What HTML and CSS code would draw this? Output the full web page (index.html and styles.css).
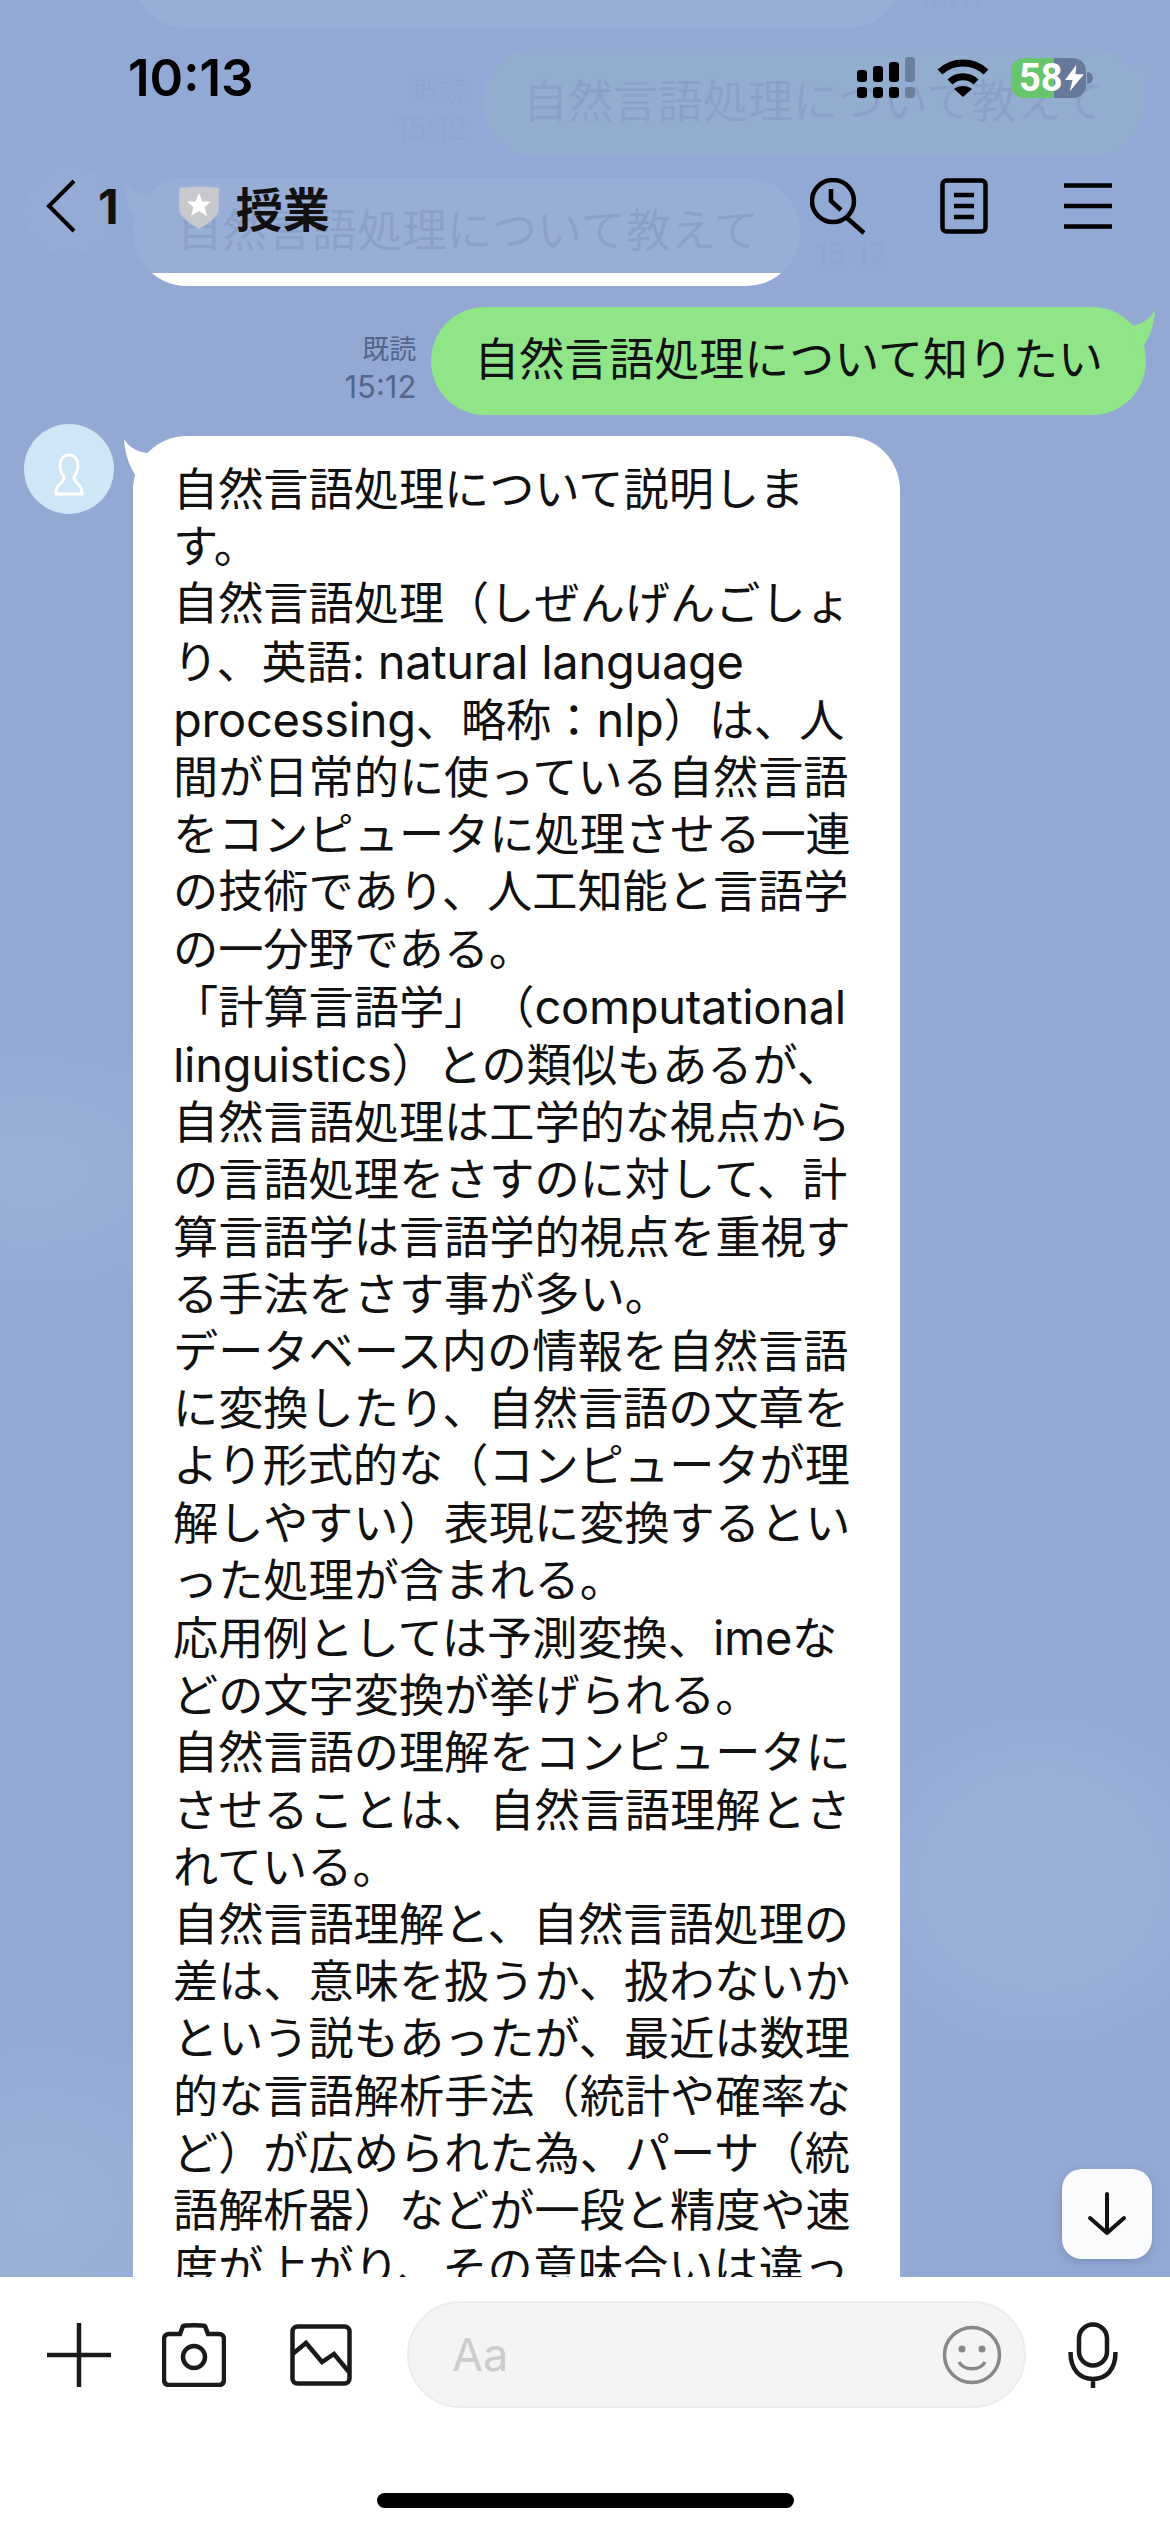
FILE: index.html
```html
<!DOCTYPE html>
<html lang="ja">
<head>
    <meta charset="UTF-8">
    <meta name="viewport" content="width=device-width, initial-scale=1.0">
    <title>授業</title>
    <link rel="stylesheet" href="styles.css">
</head>
<body>
    <div class="phone">
        <div class="chat">
            <div class="row row-left row-first">
                <div class="spacer"></div>
                <div class="bubble bubble-white bubble-first"></div>
                <div class="meta meta-left"><span class="time">15:11</span></div>
            </div>
            <div class="row row-right">
                <div class="meta"><span>既読</span><span class="time">15:12</span></div>
                <div class="bubble bubble-green bubble-ghost-green">自然言語処理について教えて
                    <svg class="tail tail-right" viewBox="0 0 26 44"><path d="M0 16C10 16 20 10 26 0C25 16 20 32 8 44Z"/></svg>
                </div>
            </div>
            <div class="row row-left">
                <div class="avatar avatar-ghost"></div>
                <div class="bubble bubble-white bubble-ghost-white">自然言語処理について教えて
                    <svg class="tail tail-left" viewBox="0 0 26 44"><path d="M26 14C16 14 6 10 0 0C1 16 6 32 18 44Z"/></svg>
                </div>
                <div class="meta meta-left"><span class="time">15:12</span></div>
            </div>
            <div class="row row-right">
                <div class="meta"><span>既読</span><span class="time">15:12</span></div>
                <div class="bubble bubble-green">自然言語処理について知りたい
                    <svg class="tail tail-right" viewBox="0 0 26 44"><path d="M0 16C10 16 20 10 26 0C25 16 20 32 8 44Z"/></svg>
                </div>
            </div>
            <div class="row row-left">
                <div class="avatar">
                    <svg viewBox="0 0 90 90" class="avatar-icon"><path d="M45 31c-6 0-9 5-9 11 0 5 2 8 4 11 0 4-2 5-5 8-2 2-3 5-3 9h26c0-4-1-7-3-9-3-3-5-4-5-8 2-3 4-6 4-11 0-6-3-11-9-11Z"/></svg>
                </div>
                <div class="bubble bubble-white bubble-long">自然言語処理について説明しま<br>す。<br>自然言語処理（しぜんげんごしょ<br>り、英語: <span class="en">natural language</span><br><span class="en">processing</span>、略称：<span class="en">nlp</span>）は、人<br>間が日常的に使っている自然言語<br>をコンピュータに処理させる一連<br>の技術であり、人工知能と言語学<br>の一分野である。<br>「計算言語学」（<span class="en">computational</span><br><span class="en">linguistics</span>）との類似もあるが、<br>自然言語処理は工学的な視点から<br>の言語処理をさすのに対して、計<br>算言語学は言語学的視点を重視す<br>る手法をさす事が多い。<br>データベース内の情報を自然言語<br>に変換したり、自然言語の文章を<br>より形式的な（コンピュータが理<br>解しやすい）表現に変換するとい<br>った処理が含まれる。<br>応用例としては予測変換、<span class="en">ime</span>な<br>どの文字変換が挙げられる。<br>自然言語の理解をコンピュータに<br>させることは、自然言語理解とさ<br>れている。<br>自然言語理解と、自然言語処理の<br>差は、意味を扱うか、扱わないか<br>という説もあったが、最近は数理<br>的な言語解析手法（統計や確率な<br>ど）が広められた為、パーサ（統<br>語解析器）などが一段と精度や速<br>度が上がり、その意味合いは違っ
                    <svg class="tail tail-left" viewBox="0 0 26 44"><path d="M26 14C16 14 6 10 0 0C1 16 6 32 18 44Z"/></svg>
                </div>
            </div>
            <div class="down-btn">
                <svg viewBox="0 0 40 44"><path d="M20 2V41M3 26L20 41L37 26"/></svg>
            </div>
        </div>

        <div class="header">
            <div class="status">
                <span class="clock">10:13</span>
                <div class="status-icons">
                    <svg class="signal" viewBox="0 0 58 41">
                        <rect x="0" y="13" width="10" height="12" rx="3"/><rect x="16" y="9" width="10" height="16" rx="3"/><rect x="32" y="5" width="10" height="20" rx="3"/><rect class="off" x="48" y="0" width="10" height="25" rx="3"/>
                        <rect x="0" y="30" width="10" height="11" rx="3"/><rect x="16" y="30" width="10" height="11" rx="3"/><rect x="32" y="30" width="10" height="11" rx="3"/><rect class="off" x="48" y="30" width="10" height="11" rx="3"/>
                    </svg>
                    <svg class="wifi" viewBox="0 0 52 38">
                        <path d="M3 13C16 1 36 1 49 13" class="arc"/><path d="M13 23C20 16 32 16 39 23" class="arc"/><path d="M26 38L17 30C22 26 30 26 35 30Z"/>
                    </svg>
                    <div class="battery">
                        <div class="battery-body">
                            <span class="battery-num">58</span>
                            <svg class="bolt" viewBox="0 0 20 28"><path d="M12 0L0 16H8L5 28L20 10H11Z"/></svg>
                        </div>
                        <div class="battery-nub"></div>
                    </div>
                </div>
            </div>
            <div class="nav">
                <svg class="back" viewBox="0 0 32 54"><path d="M29 2L4 27L29 52"/></svg>
                <span class="count">1</span>
                <svg class="shield" viewBox="0 0 40 46"><path class="shield-bg" d="M0 5C12 3 28 3 40 5V25C40 34 28 41 20 46C12 41 0 34 0 25Z"/><path class="shield-star" d="M20 10L23.5 18.5H32L25.5 24L28 33L20 28L12 33L14.5 24L8 18.5H16.5Z"/></svg>
                <span class="title">授業</span>
                <div class="nav-icons">
                    <svg class="nav-search" viewBox="0 0 56 57"><circle cx="23" cy="23" r="21"/><path d="M21 11V23L31 32M37 40L54 55"/></svg>
                    <svg class="nav-doc" viewBox="0 0 48 56"><rect x="2.5" y="2.5" width="43" height="51" rx="4"/><path d="M14 17H34M14 28H34M14 39H34"/></svg>
                    <svg class="nav-menu" viewBox="0 0 48 46"><path d="M0 2.5H48M0 23H48M0 43.500H48"/></svg>
                </div>
            </div>
        </div>

        <div class="footer">
            <div class="input-row">
                <svg class="ic-plus" viewBox="0 0 64 64"><path d="M32 0V64M0 32H64"/></svg>
                <svg class="ic-camera" viewBox="0 0 64 64"><path d="M7 11H18L21 3C21 2 43 2 43 3L46 11H57C60 11 62 13 62 16V56C62 60 60 62 57 62H7C4 62 2 60 2 56V16C2 13 4 11 7 11Z"/><circle cx="32" cy="34" r="11"/></svg>
                <svg class="ic-image" viewBox="0 0 62 62"><rect x="2.500" y="2.500" width="57" height="57" rx="5"/><path d="M2.500 30L16 19L32 38L44 30L59 48"/></svg>
                <div class="input-box">
                    <span class="placeholder">Aa</span>
                    <svg class="ic-smile" viewBox="0 0 60 60"><circle cx="30" cy="30" r="27.500"/><circle class="dot" cx="20" cy="24" r="3.500"/><circle class="dot" cx="40" cy="24" r="3.500"/><path d="M17 37C22 46 38 46 43 37"/></svg>
                </div>
                <svg class="ic-mic" viewBox="0 0 50 66"><rect x="11" y="2.500" width="28" height="41" rx="14"/><path d="M2.500 30C2.500 48 12 57 25 57C38 57 47.500 48 47.500 30M25 57V66"/></svg>
            </div>
            <div class="home-bar"></div>
        </div>
    </div>
</body>
</html>
```

FILE: styles.css
```css
* {
    box-sizing: border-box;
}
body {
    margin: 0;
    font-family: Inter, "Noto Sans CJK JP", sans-serif;
}
svg {
    display: block;
    flex-shrink: 0;
}
.phone {
    position: relative;
    width: 1170px;
    height: 2532px;
    overflow: hidden;
    display: flex;
    flex-direction: column;
    background: #fff;
}

/* chat area */
.chat {
    position: relative;
    flex: 1;
    min-height: 0;
    overflow: hidden;
    display: flex;
    flex-direction: column;
    gap: 21px;
    background-color: #93a9d4;
    background-image:
        radial-gradient(ellipse 210px 190px at 1040px 1880px, #9cb1da, #9ab0d9 50%, transparent),
        radial-gradient(ellipse 230px 150px at 30px 1170px, #9bb1d9, transparent),
        radial-gradient(ellipse 230px 200px at 40px 2210px, #9db2da, transparent);
    text-spacing-trim: space-all;
}
.row {
    display: flex;
    flex-shrink: 0;
}
.row-right {
    justify-content: flex-end;
    align-items: flex-end;
    padding-right: 24px;
}
.row-left {
    padding-left: 24px;
}
.row-first {
    height: 28px;
}
.spacer {
    width: 109px;
}
.avatar {
    width: 90px;
    height: 90px;
    margin-top: -12px;
    margin-right: 19px;
    border-radius: 50%;
    background: #cfe6f6;
    display: flex;
    justify-content: center;
    align-items: center;
}
.avatar-ghost {
    background: #b4c8e8;
}
.avatar-icon {
    width: 90px;
    height: 90px;
    fill: none;
    stroke: #fff;
    stroke-width: 3;
}
.bubble {
    position: relative;
    flex-shrink: 0;
    height: 108px;
    padding: 0 43px;
    border-radius: 54px;
    font-size: 45px;
    line-height: 106px;
    color: #111;
    white-space: nowrap;
}
.bubble-white {
    background: #fff;
}
.bubble-green {
    background: #8fe588;
}
.bubble-first {
    width: 769px;
    margin-top: -80px;
}
.bubble-ghost-green {
    width: 664px;
    padding-left: 41px;
}
.bubble-ghost-white {
    width: 667px;
    padding-left: 44px;
}
.bubble-long {
    width: 767px;
    height: auto;
    padding-top: 25px;
    padding-bottom: 60px;
    padding-left: 40px;
    font-size: 45.200px;
    line-height: 57.200px;
}
.en {
    font-size: 47px;
    letter-spacing: -0.300px;
}
.tail {
    position: absolute;
    width: 26px;
    height: 44px;
}
.tail-right {
    top: 3px;
    right: -9px;
    fill: #8fe588;
}
.tail-left {
    top: 3px;
    left: -9px;
    fill: #fff;
}
.meta {
    display: flex;
    flex-direction: column;
    align-items: flex-end;
    gap: 5px;
    margin-right: 15px;
    margin-bottom: 12px;
    font-size: 27px;
    line-height: 32px;
    color: #56668a;
}
.time {
    font-size: 31px;
}
.meta-left {
    align-self: flex-end;
    margin-left: 15px;
    margin-right: 0;
    margin-bottom: 16px;
}
.down-btn {
    position: absolute;
    top: 2169px;
    left: 1062px;
    width: 90px;
    height: 90px;
    border-radius: 20px;
    background: #fafbfc;
    box-shadow: 0 3px 8px rgba(50, 70, 110, 0.25);
    display: flex;
    justify-content: center;
    align-items: center;
}
.down-btn svg {
    width: 40px;
    height: 44px;
    fill: none;
    stroke: #111;
    stroke-width: 4;
    stroke-linecap: round;
    stroke-linejoin: round;
}

/* header floats over the messages */
.header {
    position: absolute;
    top: 0;
    left: 0;
    width: 100%;
    height: 273px;
    background: rgba(147, 169, 212, 0.94);
}
.status {
    display: flex;
    justify-content: space-between;
    align-items: center;
    height: 41px;
    margin-top: 57px;
    padding-left: 128px;
    padding-right: 77px;
}
.clock {
    font-size: 51px;
    font-weight: 600;
    color: #000;
}
.status-icons {
    display: flex;
    align-items: center;
    gap: 22px;
}
.signal {
    width: 58px;
    height: 41px;
    fill: #000;
}
.signal .off {
    fill: #6d7f9f;
}
.wifi {
    width: 52px;
    height: 38px;
}
.wifi .arc {
    fill: none;
    stroke: #000;
    stroke-width: 7;
}
.battery {
    display: flex;
    align-items: center;
    gap: 1px;
}
.battery-body {
    width: 75px;
    height: 40px;
    border-radius: 13px;
    background: linear-gradient(90deg, #67c56b 0 43px, #67799a 43px);
    display: flex;
    align-items: center;
    padding-left: 8px;
    gap: 2px;
}
.battery-num {
    font-family: Roboto, sans-serif;
    font-size: 38px;
    font-weight: 700;
    line-height: 40px;
    color: #fff;
}
.bolt {
    width: 19px;
    height: 28px;
    fill: #fff;
}
.battery-nub {
    width: 6px;
    height: 12px;
    border-radius: 0 6px 6px 0;
    background: #67799a;
}
.nav {
    display: flex;
    align-items: center;
    height: 56px;
    margin-top: 80px;
    padding-left: 45px;
}
.back {
    width: 32px;
    height: 54px;
    fill: none;
    stroke: #000;
    stroke-width: 4;
}
.count {
    margin-left: 21px;
    font-size: 48px;
    font-weight: 700;
    color: #111;
}
.shield {
    width: 40px;
    height: 46px;
    margin-left: 60px;
}
.shield-bg {
    fill: #c8c9cc;
    stroke: #a9bcdd;
    stroke-width: 1;
}
.shield-star {
    fill: #fff;
}
.title {
    margin-left: 17px;
    font-size: 47px;
    font-weight: 700;
    color: #111;
}
.nav-icons {
    display: flex;
    align-items: center;
    margin-left: auto;
    margin-right: 58px;
    gap: 74px;
}
.nav-icons svg {
    fill: none;
    stroke: #000;
    stroke-width: 4.500;
}
.nav-search {
    width: 56px;
    height: 57px;
}
.nav-doc {
    width: 48px;
    height: 56px;
    margin-right: 2px;
}
.nav-menu {
    width: 48px;
    height: 46px;
}

/* footer */
.footer {
    flex-shrink: 0;
    height: 255px;
    padding-top: 24px;
    background: #fff;
}
.input-row {
    display: flex;
    align-items: center;
    height: 107px;
    padding-left: 47px;
}
.input-row svg {
    fill: none;
    stroke: #1a1a1a;
    stroke-width: 4.500;
}
.ic-plus {
    width: 64px;
    height: 64px;
    margin-right: 51px;
}
.ic-camera {
    width: 64px;
    height: 64px;
    margin-right: 64px;
}
.ic-image {
    width: 62px;
    height: 62px;
    margin-right: 55px;
}
.input-box {
    display: flex;
    align-items: center;
    justify-content: space-between;
    width: 619px;
    height: 107px;
    padding: 0 22px 0 43px;
    border: 2px solid #ececec;
    border-radius: 54px;
    background: #f4f4f4;
}
.placeholder {
    font-size: 45px;
    color: #cccccc;
}
.input-row .ic-smile {
    width: 60px;
    height: 60px;
    stroke: #888;
    stroke-width: 3.500;
}
.ic-smile .dot {
    fill: #888;
    stroke: none;
}
.ic-mic {
    width: 50px;
    height: 66px;
    margin-left: 42px;
}
.home-bar {
    width: 417px;
    height: 15px;
    margin: 85px auto 0;
    border-radius: 8px;
    background: #000;
}
```
